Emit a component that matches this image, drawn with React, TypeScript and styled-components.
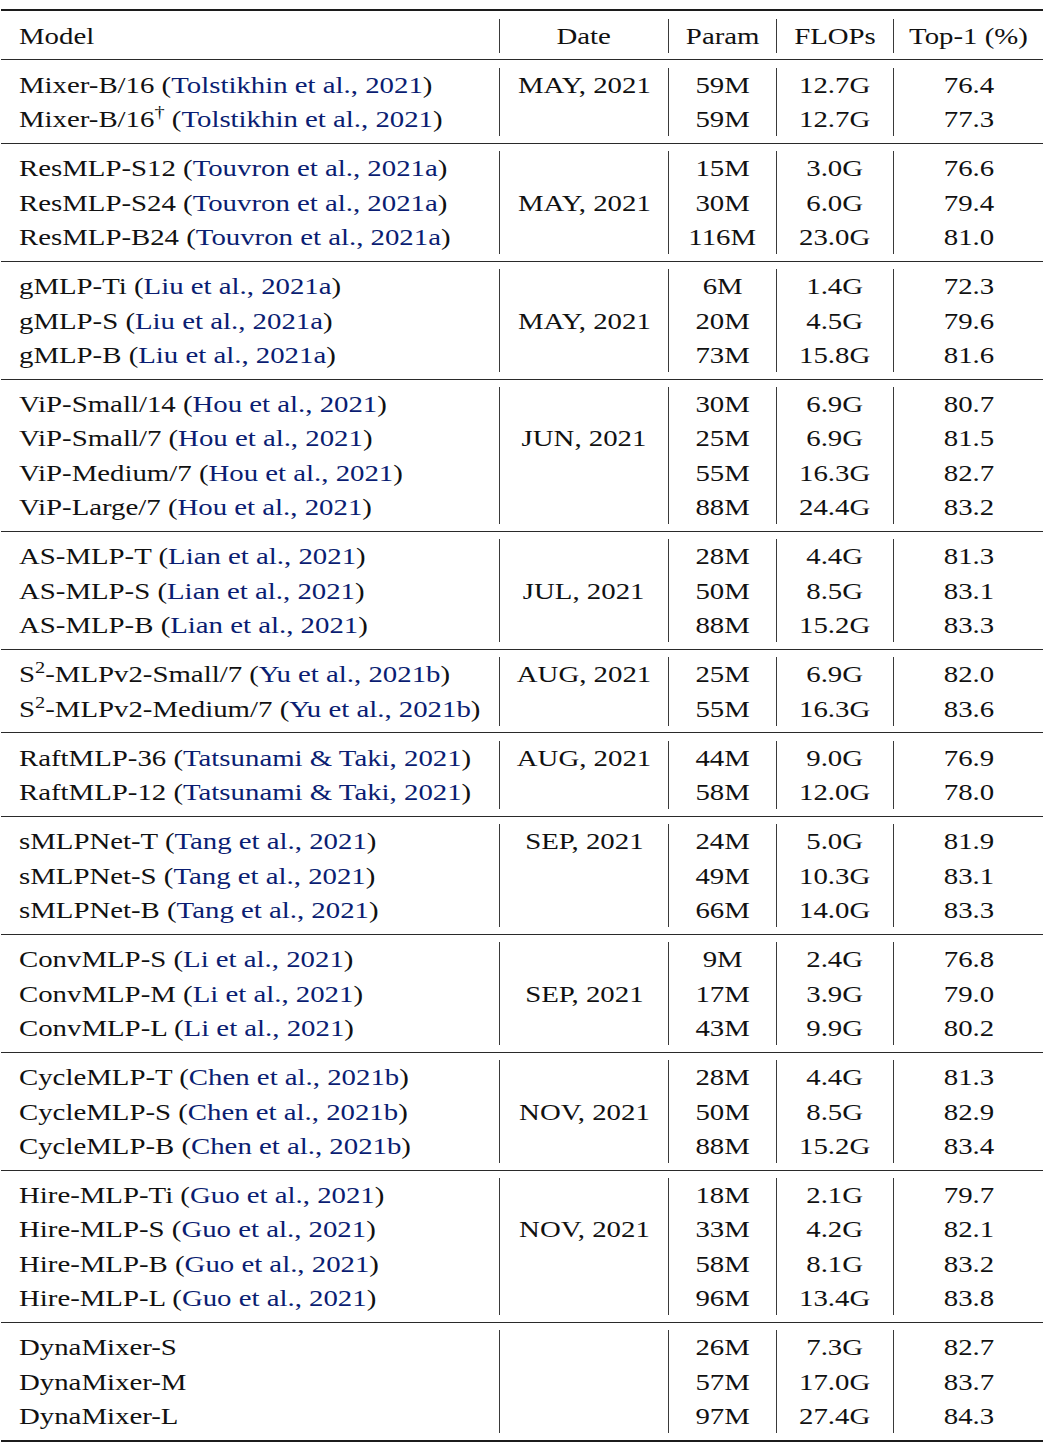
import React from 'react';
import styled, { createGlobalStyle } from 'styled-components';

const GlobalStyle = createGlobalStyle`
  body {
    margin: 0;
    background: #ffffff;
    font-family: "Liberation Serif", "Times New Roman", serif;
    color: #111111;
  }
`;

// one model line of the table
interface Entry {
  name: React.ReactNode;
  cite?: string;
  param: string;
  flops: string;
  top1: string;
}

interface Group {
  date?: string;
  dateRow?: number;
  rows: Entry[];
}

const Sup = styled.sup`
  font-size: 17px;
  line-height: 0;
  vertical-align: 9px;
`;

const S2 = ({ rest }: { rest: string }) => (
  <>
    S<Sup>2</Sup>
    {rest}
  </>
);

const groups: Group[] = [
  {
    date: 'MAY, 2021',
    dateRow: 0,
    rows: [
      { name: 'Mixer-B/16', cite: 'Tolstikhin et al., 2021', param: '59M', flops: '12.7G', top1: '76.4' },
      {
        name: (
          <>
            Mixer-B/16<Sup>†</Sup>
          </>
        ),
        cite: 'Tolstikhin et al., 2021',
        param: '59M',
        flops: '12.7G',
        top1: '77.3',
      },
    ],
  },
  {
    date: 'MAY, 2021',
    dateRow: 1,
    rows: [
      { name: 'ResMLP-S12', cite: 'Touvron et al., 2021a', param: '15M', flops: '3.0G', top1: '76.6' },
      { name: 'ResMLP-S24', cite: 'Touvron et al., 2021a', param: '30M', flops: '6.0G', top1: '79.4' },
      { name: 'ResMLP-B24', cite: 'Touvron et al., 2021a', param: '116M', flops: '23.0G', top1: '81.0' },
    ],
  },
  {
    date: 'MAY, 2021',
    dateRow: 1,
    rows: [
      { name: 'gMLP-Ti', cite: 'Liu et al., 2021a', param: '6M', flops: '1.4G', top1: '72.3' },
      { name: 'gMLP-S', cite: 'Liu et al., 2021a', param: '20M', flops: '4.5G', top1: '79.6' },
      { name: 'gMLP-B', cite: 'Liu et al., 2021a', param: '73M', flops: '15.8G', top1: '81.6' },
    ],
  },
  {
    date: 'JUN, 2021',
    dateRow: 1,
    rows: [
      { name: 'ViP-Small/14', cite: 'Hou et al., 2021', param: '30M', flops: '6.9G', top1: '80.7' },
      { name: 'ViP-Small/7', cite: 'Hou et al., 2021', param: '25M', flops: '6.9G', top1: '81.5' },
      { name: 'ViP-Medium/7', cite: 'Hou et al., 2021', param: '55M', flops: '16.3G', top1: '82.7' },
      { name: 'ViP-Large/7', cite: 'Hou et al., 2021', param: '88M', flops: '24.4G', top1: '83.2' },
    ],
  },
  {
    date: 'JUL, 2021',
    dateRow: 1,
    rows: [
      { name: 'AS-MLP-T', cite: 'Lian et al., 2021', param: '28M', flops: '4.4G', top1: '81.3' },
      { name: 'AS-MLP-S', cite: 'Lian et al., 2021', param: '50M', flops: '8.5G', top1: '83.1' },
      { name: 'AS-MLP-B', cite: 'Lian et al., 2021', param: '88M', flops: '15.2G', top1: '83.3' },
    ],
  },
  {
    date: 'AUG, 2021',
    dateRow: 0,
    rows: [
      { name: <S2 rest="-MLPv2-Small/7" />, cite: 'Yu et al., 2021b', param: '25M', flops: '6.9G', top1: '82.0' },
      { name: <S2 rest="-MLPv2-Medium/7" />, cite: 'Yu et al., 2021b', param: '55M', flops: '16.3G', top1: '83.6' },
    ],
  },
  {
    date: 'AUG, 2021',
    dateRow: 0,
    rows: [
      { name: 'RaftMLP-36', cite: 'Tatsunami & Taki, 2021', param: '44M', flops: '9.0G', top1: '76.9' },
      { name: 'RaftMLP-12', cite: 'Tatsunami & Taki, 2021', param: '58M', flops: '12.0G', top1: '78.0' },
    ],
  },
  {
    date: 'SEP, 2021',
    dateRow: 0,
    rows: [
      { name: 'sMLPNet-T', cite: 'Tang et al., 2021', param: '24M', flops: '5.0G', top1: '81.9' },
      { name: 'sMLPNet-S', cite: 'Tang et al., 2021', param: '49M', flops: '10.3G', top1: '83.1' },
      { name: 'sMLPNet-B', cite: 'Tang et al., 2021', param: '66M', flops: '14.0G', top1: '83.3' },
    ],
  },
  {
    date: 'SEP, 2021',
    dateRow: 1,
    rows: [
      { name: 'ConvMLP-S', cite: 'Li et al., 2021', param: '9M', flops: '2.4G', top1: '76.8' },
      { name: 'ConvMLP-M', cite: 'Li et al., 2021', param: '17M', flops: '3.9G', top1: '79.0' },
      { name: 'ConvMLP-L', cite: 'Li et al., 2021', param: '43M', flops: '9.9G', top1: '80.2' },
    ],
  },
  {
    date: 'NOV, 2021',
    dateRow: 1,
    rows: [
      { name: 'CycleMLP-T', cite: 'Chen et al., 2021b', param: '28M', flops: '4.4G', top1: '81.3' },
      { name: 'CycleMLP-S', cite: 'Chen et al., 2021b', param: '50M', flops: '8.5G', top1: '82.9' },
      { name: 'CycleMLP-B', cite: 'Chen et al., 2021b', param: '88M', flops: '15.2G', top1: '83.4' },
    ],
  },
  {
    date: 'NOV, 2021',
    dateRow: 1,
    rows: [
      { name: 'Hire-MLP-Ti', cite: 'Guo et al., 2021', param: '18M', flops: '2.1G', top1: '79.7' },
      { name: 'Hire-MLP-S', cite: 'Guo et al., 2021', param: '33M', flops: '4.2G', top1: '82.1' },
      { name: 'Hire-MLP-B', cite: 'Guo et al., 2021', param: '58M', flops: '8.1G', top1: '83.2' },
      { name: 'Hire-MLP-L', cite: 'Guo et al., 2021', param: '96M', flops: '13.4G', top1: '83.8' },
    ],
  },
  {
    rows: [
      { name: 'DynaMixer-S', param: '26M', flops: '7.3G', top1: '82.7' },
      { name: 'DynaMixer-M', param: '57M', flops: '17.0G', top1: '83.7' },
      { name: 'DynaMixer-L', param: '97M', flops: '27.4G', top1: '84.3' },
    ],
  },
];

const Page = styled.div`
  padding: 9px 0 0 1px;
`;

const Table = styled.div`
  width: 1042px;
  border-top: 2px solid #1c1c1c;
  border-bottom: 2px solid #1c1c1c;
`;

const Block = styled.div<{ $ruled?: boolean }>`
  padding: 7.5px 0 6.5px;
  border-top: ${({ $ruled }) => ($ruled ? '1px solid #2a2a2a' : 'none')};
`;

const Row = styled.div`
  display: grid;
  grid-template-columns: 498px 169px 108px 117px 1fr;
  height: 34.3px;
  font-size: 24px;
  line-height: 34.3px;
`;

const Cell = styled.div<{ $first?: boolean }>`
  text-align: ${({ $first }) => ($first ? 'left' : 'center')};
  padding-left: ${({ $first }) => ($first ? '18px' : '0')};
  border-left: ${({ $first }) => ($first ? 'none' : '1px solid #3a3a3a')};
  white-space: nowrap;
`;

// the source table is set a little wider than Times, so stretch the glyphs
const Text = styled.span<{ $first?: boolean }>`
  display: inline-block;
  transform: scaleX(1.2);
  transform-origin: ${({ $first }) => ($first ? 'left center' : 'center center')};
`;

const Cite = styled.span`
  color: #0a1d72;
`;

const App: React.FC = () => (
  <Page>
    <GlobalStyle />
    <Table>
      <Block>
        <Row>
          <Cell $first>
            <Text $first>Model</Text>
          </Cell>
          <Cell>
            <Text>Date</Text>
          </Cell>
          <Cell>
            <Text>Param</Text>
          </Cell>
          <Cell>
            <Text>FLOPs</Text>
          </Cell>
          <Cell>
            <Text>Top-1 (%)</Text>
          </Cell>
        </Row>
      </Block>
      {groups.map((g, gi) => (
        <Block key={gi} $ruled>
          {g.rows.map((r, ri) => (
            <Row key={ri}>
              <Cell $first>
                <Text $first>
                  {r.name}
                  {r.cite && (
                    <>
                      {' '}
                      (<Cite>{r.cite}</Cite>)
                    </>
                  )}
                </Text>
              </Cell>
              <Cell>
                <Text>{g.date && g.dateRow === ri ? g.date : ''}</Text>
              </Cell>
              <Cell>
                <Text>{r.param}</Text>
              </Cell>
              <Cell>
                <Text>{r.flops}</Text>
              </Cell>
              <Cell>
                <Text>{r.top1}</Text>
              </Cell>
            </Row>
          ))}
        </Block>
      ))}
    </Table>
  </Page>
);

export default App;
